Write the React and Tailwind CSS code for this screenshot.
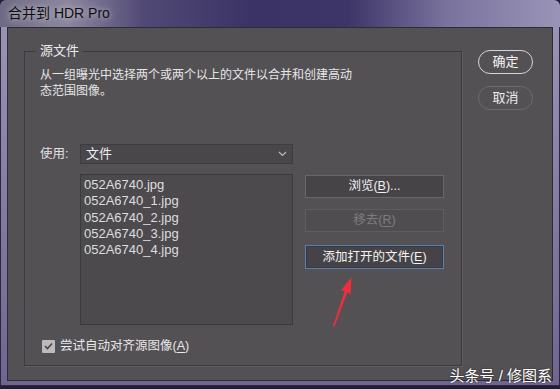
import React from 'react';

// underlined access key, e.g. 浏览(B)
const Key = ({ children }) => <span className="underline underline-offset-2">{children}</span>;

const files = ['052A6740.jpg', '052A6740_1.jpg', '052A6740_2.jpg', '052A6740_3.jpg', '052A6740_4.jpg'];

export default function App() {
    return (
        <div className="relative w-[560px] h-[389px] overflow-hidden bg-[#241c30] font-['Liberation_Sans','Noto_Sans_CJK_SC',sans-serif]">
            {/* window frame */}
            <div className="w-[560px] h-[386px] rounded-t-[6px] border border-[#2c2640] bg-gradient-to-b from-[#9d97b6] to-[#6e6690] flex flex-col">
                {/* title bar */}
                <div className="h-[27px] -mx-px -mt-px rounded-t-[6px] flex items-center pl-[8px] bg-[linear-gradient(to_right,#6f6a84_0%,#8c879f_12%,#504874_26%,#3b3365_45%,#3d3567_62%,#7a739e_80%,#9a94b8_100%)]">
                    <span className="text-[14px] text-[#101010] [text-shadow:0_0_6px_rgba(255,255,255,0.7)]">合并到 HDR Pro</span>
                </div>

                {/* content panel */}
                <div className="mx-[6px] h-[354px] border border-[#2f2c35] bg-[#545155] flex">
                    {/* group box */}
                    <fieldset className="ml-[16px] mt-[15px] w-[438px] h-[323px] border border-[#3c3a3f] shadow-[1px_1px_0_#605d61]">
                        <legend className="ml-[11px] px-[4px] text-[13px] leading-[16px] text-[#ececec]">源文件</legend>
                        <div className="pl-[15px]">
                            <p className="mt-[8px] text-[12px] leading-[16px] text-[#e6e6e6]">
                                从一组曝光中选择两个或两个以上的文件以合并和创建高动
                                <br />
                                态范围图像。
                            </p>

                            <div className="mt-[45px] flex items-center">
                                <span className="w-[40px] text-[12.5px] text-[#e0e0e0]">使用:</span>
                                <div className="w-[213px] h-[20px] bg-[#4a474b] border border-[#3e3c40] flex items-center justify-between pl-[5px] pr-[5px]">
                                    <span className="text-[13px] text-[#eeeeee]">文件</span>
                                    <svg width="9" height="6" viewBox="0 0 9 6" fill="none" stroke="#bdbbbe" strokeWidth="1.2">
                                        <path d="M1 1l3.5 3.5L8 1" />
                                    </svg>
                                </div>
                            </div>

                            <div className="mt-[10px] flex items-start">
                                <div className="ml-[40px] w-[213px] h-[151px] bg-[#4d4a4e] border border-[#3b393d] pl-[3px] pt-[2px]">
                                    {files.map((f) => (
                                        <div key={f} className="text-[13px] leading-[16.3px] text-[#dedede]">{f}</div>
                                    ))}
                                </div>

                                <div className="ml-[12px] mt-[1px] w-[139px] flex flex-col">
                                    <div className="h-[23px] bg-[#474448] border border-[#6a676b] flex items-center justify-center text-[12.5px] text-[#f0f0f0]">
                                        浏览(<Key>B</Key>)...
                                    </div>
                                    <div className="mt-[11px] h-[23px] bg-[#504d51] border border-[#5f5c60] flex items-center justify-center text-[12.5px] text-[#7f7c80]">
                                        移去(<Key>R</Key>)
                                    </div>
                                    <div className="mt-[13px] h-[24px] bg-[#454347] border border-[#5b7fb3] shadow-[inset_0_0_0_1px_#3a3a44] flex items-center justify-center text-[12.5px] text-[#f2f2f2]">
                                        添加打开的文件(<Key>E</Key>)
                                    </div>
                                </div>
                            </div>

                            <div className="mt-[12px] ml-[2px] flex items-center gap-[5px]">
                                <div className="w-[13px] h-[13px] bg-[#bdbabe] rounded-[1px] flex items-center justify-center">
                                    <svg width="9" height="8" viewBox="0 0 9 8" fill="none" stroke="#48464a" strokeWidth="1.6">
                                        <path d="M1 4l2.5 2.5L8 1.5" />
                                    </svg>
                                </div>
                                <span className="text-[12.5px] text-[#e8e8e8]">尝试自动对齐源图像(<Key>A</Key>)</span>
                            </div>
                        </div>
                    </fieldset>

                    {/* right buttons */}
                    <div className="ml-[16px] mt-[22px] flex flex-col gap-[12px]">
                        <div className="w-[55px] h-[24px] rounded-full border-[1.5px] border-[#d6d4d8] flex items-center justify-center text-[13px] text-[#f4f4f4]">确定</div>
                        <div className="w-[55px] h-[24px] rounded-full border border-[#6d6a6e] flex items-center justify-center text-[13px] text-[#ececec]">取消</div>
                    </div>
                </div>
            </div>

            {/* red arrow annotation */}
            <svg className="absolute left-0 top-0 pointer-events-none" width="560" height="389" viewBox="0 0 560 389">
                <polygon points="333,326 344.6,291.3 341,290.3 351.5,277 350.6,294 347.3,292.2 334.6,326.6" fill="#ec2f3b" />
            </svg>

            {/* watermark */}
            <div className="absolute right-[8px] bottom-[4px] text-[15px] leading-[18px] text-white [text-shadow:0_0_2px_rgba(0,0,0,0.6)]">
                头条号 / 修图系
            </div>
        </div>
    );
}
